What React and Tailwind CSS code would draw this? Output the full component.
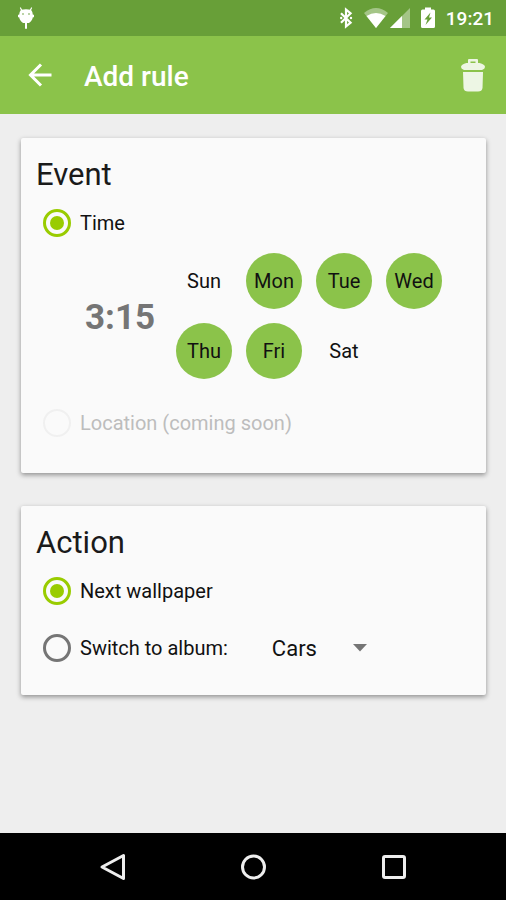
import React, { useState } from 'react';

const DAYS = ['Sun', 'Mon', 'Tue', 'Wed', 'Thu', 'Fri', 'Sat'];
const ALBUMS = ['Cars', 'Nature', 'Space'];

const StatusBar = () => (
  <div className="flex h-9 items-center justify-between bg-[#689f38] pr-3 pl-4 text-white">
    <svg className="h-6 w-5" viewBox="0 0 20 24" fill="currentColor">
      <path d="M4.500 2l1.300 2.500M15.500 2l-1.300 2.500" stroke="currentColor" strokeWidth="1.200" strokeLinecap="round" />
      <path d="M5 3.700Q10 2.600 15 3.700Q17 6 17 9.500Q17 14 13 17H7Q3 14 3 9.500Q3 6 5 3.700z" />
      <path d="M2 10h2M16 10h2" stroke="currentColor" strokeWidth="2.600" />
      <rect x="9" y="16" width="2" height="7" rx="1" />
      <circle cx="7" cy="8" r="1" fill="#a4c58a" />
      <circle cx="13" cy="8" r="1" fill="#a4c58a" />
    </svg>
    <div className="flex items-center">
      <svg className="mr-2 h-6 w-5" viewBox="0 0 20 24" fill="none" stroke="currentColor" strokeWidth="2.200">
        <path d="M5 7.200l9.600 9.400-4.600 3.900V3.500l4.600 3.900L5 16.800" />
        <circle cx="5.200" cy="12" r="1.200" fill="currentColor" stroke="none" />
        <circle cx="15" cy="12" r="1.200" fill="currentColor" stroke="none" />
      </svg>
      <svg className="mr-0.5 h-6 w-6" viewBox="0 0 24 24" fill="currentColor">
        <path d="M0 7Q12-3 24 7L12 22z" opacity="0.4" />
        <path d="M2.500 10Q12 4 21.500 10L12 22z" />
      </svg>
      <svg className="mr-2.5 h-6 w-5" viewBox="0 0 20 24" fill="currentColor">
        <path d="M20 2v20H0z" opacity="0.4" />
        <path d="M12 10v12H0z" />
      </svg>
      <svg className="mr-2.5 h-6 w-4" viewBox="0 0 16 24" fill="currentColor">
        <path d="M5 1.500h6v2h2.500q1.500 0 1.500 1.500v15.500q0 1.500-1.500 1.500h-11Q1 22 1 20.500V5q0-1.500 1.500-1.500H5z" />
        <path d="M10.500 6.500L4.500 13.500h3L5.500 19L12 11.500H9z" fill="#689f38" />
      </svg>
      <span className="pt-0.5 text-[19px] font-medium">19:21</span>
    </div>
  </div>
);

const AppBar = () => (
  <header className="flex h-[78px] items-center bg-[#8bc34a] pr-[17px] pl-6 text-white">
    <button aria-label="Back" className="mr-7 flex size-8 items-center justify-center">
      <svg className="size-8" viewBox="0 0 32 32" fill="none" stroke="currentColor" strokeWidth="3">
        <path d="M27.500 16H7M17 5.500L6.500 16 17 26.500" />
      </svg>
    </button>
    <h1 className="grow pt-1 text-[28px] font-medium">Add rule</h1>
    <button aria-label="Delete rule" className="flex items-center justify-center">
      <svg className="h-9 w-8" viewBox="0 0 32 36" fill="currentColor" opacity="0.85">
        <path d="M11 6V3Q11 2 12 2H20Q21 2 21 3V6H18.500V4.500H13.500V6z" />
        <path d="M9.500 6H22.500Q28 7.500 28 10Q28 12 25 13H7Q4 12 4 10Q4 7.500 9.500 6z" />
        <path d="M6 15H26L25.500 31Q25 34.500 21 34.500H11Q7 34.500 6.500 31z" />
      </svg>
    </button>
  </header>
);

const Card = ({ title, className, children }) => (
  <section className={`rounded-xs bg-[#fafafa] px-[15px] pt-4 shadow-[0_2px_5px_rgba(0,0,0,0.4)] ${className}`}>
    <h2 className="h-[41px] text-[31px] leading-[42px] text-[#1a1a1a]">{title}</h2>
    {children}
  </section>
);

const RadioOption = ({ name, label, checked, disabled, onChange }) => (
  <label className={`flex h-14 items-center gap-[9px] pl-[7px] text-xl ${disabled ? 'text-[#bdbdbd]' : 'text-[#111111]'}`}>
    <input
      type="radio"
      name={name}
      checked={checked}
      disabled={disabled}
      onChange={onChange}
      className="size-7 appearance-none rounded-full border-3 border-[#757575] bg-clip-content p-1 checked:border-[#99cc00] checked:bg-[#99cc00] disabled:border-2 disabled:border-[#f0f0f0]"
    />
    {label}
  </label>
);

const DayPicker = ({ selected, onToggle }) => (
  <div className="grid grid-cols-4 gap-[14px]">
    {DAYS.map((day) => (
      <button
        key={day}
        aria-pressed={selected.includes(day)}
        onClick={() => onToggle(day)}
        className={`size-14 rounded-full text-xl text-[#111111] ${selected.includes(day) ? 'bg-[#8bc34a]' : ''}`}
      >
        {day}
      </button>
    ))}
  </div>
);

const NavBar = () => (
  <nav className="flex h-[67px] items-center justify-center gap-[109px] bg-black text-[#eeeeee]">
    <button aria-label="Back">
      <svg className="size-8" viewBox="0 0 32 32" fill="none" stroke="currentColor" strokeWidth="3" strokeLinejoin="round">
        <path d="M27.500 4.500v23L6 16z" />
      </svg>
    </button>
    <button aria-label="Home">
      <svg className="size-8" viewBox="0 0 32 32" fill="none" stroke="currentColor" strokeWidth="3">
        <circle cx="16.500" cy="16" r="11" />
      </svg>
    </button>
    <button aria-label="Recent apps">
      <svg className="size-8" viewBox="0 0 32 32" fill="none" stroke="currentColor" strokeWidth="3">
        <rect x="5.500" y="5.500" width="21" height="21" rx="1.500" />
      </svg>
    </button>
  </nav>
);

const App = () => {
  const [selectedDays, setSelectedDays] = useState(['Mon', 'Tue', 'Wed', 'Thu', 'Fri']);
  const [action, setAction] = useState('next');
  const [album, setAlbum] = useState('Cars');

  const toggleDay = (day) => {
    setSelectedDays((days) =>
      days.includes(day) ? days.filter((d) => d !== day) : [...days, day]
    );
  };

  return (
    <div className="flex min-h-screen flex-col bg-[#eeeeee] font-[Roboto,sans-serif]">
      <StatusBar />
      <AppBar />

      <main className="flex grow flex-col gap-[33px] px-5 pt-6 pl-[21px]">
        <Card title="Event" className="pb-[22px]">
          <RadioOption name="event" label="Time" checked onChange={() => {}} />
          <div className="flex items-center gap-5 pt-0.5 pb-4 pl-12">
            <button className="w-[72px] pt-1 text-center text-[35px] font-bold text-[#757575]">3:15</button>
            <DayPicker selected={selectedDays} onToggle={toggleDay} />
          </div>
          <RadioOption name="event" label="Location (coming soon)" checked={false} disabled onChange={() => {}} />
        </Card>

        <Card title="Action" className="pb-[19px]">
          <RadioOption
            name="action"
            label="Next wallpaper"
            checked={action === 'next'}
            onChange={() => setAction('next')}
          />
          <div className="mt-px flex items-center gap-11">
            <RadioOption
              name="action"
              label="Switch to album:"
              checked={action === 'album'}
              onChange={() => setAction('album')}
            />
            <div className="relative">
              <select
                aria-label="Album"
                value={album}
                onChange={(e) => setAlbum(e.target.value)}
                className="w-28 appearance-none text-[22px] text-[#111111]"
              >
                {ALBUMS.map((name) => (
                  <option key={name}>{name}</option>
                ))}
              </select>
              <svg className="pointer-events-none absolute top-3 right-4 h-2 w-4" viewBox="0 0 16 8" fill="#757575">
                <path d="M1 0h14L8 7.500z" />
              </svg>
            </div>
          </div>
        </Card>
      </main>

      <NavBar />
    </div>
  );
};

export default App;
